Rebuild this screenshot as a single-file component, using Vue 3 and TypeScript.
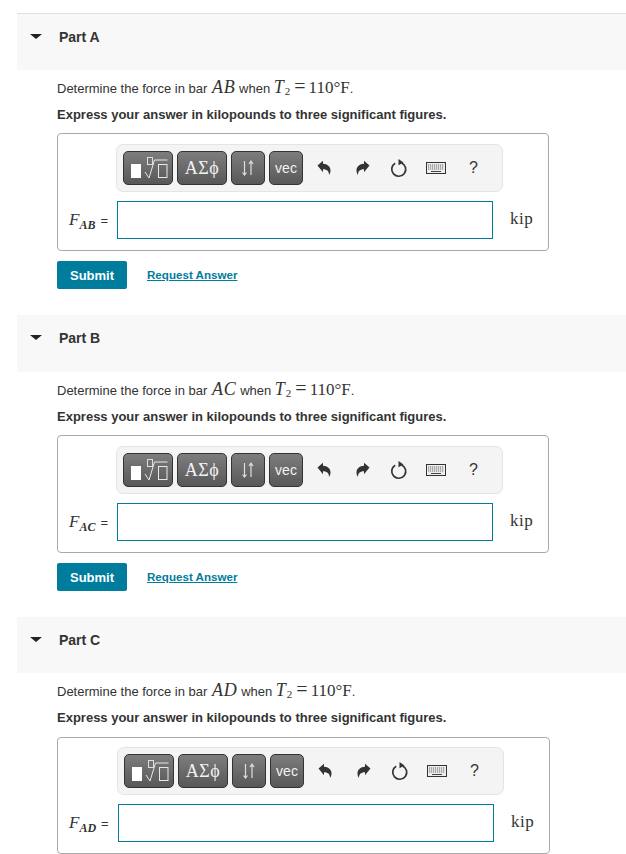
<script setup lang="ts">
interface Part {
  name: string
  bar: string
  last: boolean
}
const parts: Part[] = [
  { name: 'Part A', bar: 'AB', last: false },
  { name: 'Part B', bar: 'AC', last: false },
  { name: 'Part C', bar: 'AD', last: true },
]
</script>

<template>
  <div class="page">
    <section v-for="(p, i) in parts" :key="p.name" class="part" :class="{ first: i === 0, last: p.last }">
      <header class="head">
        <span class="tri"></span>
        <h2 class="title">{{ p.name }}</h2>
      </header>
      <div class="body">
        <p class="q">
          Determine the force in bar <i class="m big bar">{{ p.bar }}</i> when
          <span class="m big"><i>T</i><sub>2</sub><span class="rel">=</span><span class="num">110°F</span></span>.
        </p>
        <p class="ins">Express your answer in kilopounds to three significant figures.</p>
        <div class="box">
          <div class="toolbar">
            <button class="tb b1" type="button" aria-label="templates">
              <svg width="44" height="30" viewBox="0 0 44 30">
                <rect x="5" y="11" width="10" height="14" fill="#fff" />
                <rect x="21.5" y="4.5" width="5" height="7" fill="none" stroke="#ddd" />
                <path d="M19 19l4 6 5.5-18h13" fill="none" stroke="#e8e8e8" />
                <rect x="32.5" y="11.5" width="8.5" height="13" fill="none" stroke="#e8e8e8" />
              </svg>
            </button>
            <button class="tb b1 greek" type="button">ΑΣϕ</button>
            <button class="tb b2" type="button" aria-label="arrows">
              <svg width="20" height="20" viewBox="0 0 20 20">
                <path d="M6.5 3v14M4.5 14.5l2 2.5 2-2.5M13 17V3M11 6l2-3 2 3" fill="none" stroke="#ddd" stroke-width="1.2" />
              </svg>
            </button>
            <button class="tb b2 vec" type="button">vec</button>
            <svg class="ic undo" width="14" height="16" viewBox="0 0 14 16">
              <path d="M0.5 5.5L6 0.8v3c4.5 0.2 7.5 2.7 7.5 6.7 0 1.8-0.6 3.3-1.5 4.5 0.2-3.6-1.6-5.8-6-5.8v3z" fill="#333" />
            </svg>
            <svg class="ic redo" width="14" height="16" viewBox="0 0 14 16">
              <path d="M13.5 5.5L8 0.8v3c-4.5 0.2-7.5 2.7-7.5 6.7 0 1.8 0.6 3.3 1.5 4.5-0.2-3.6 1.6-5.8 6-5.8v3z" fill="#333" />
            </svg>
            <svg class="ic reset" width="18" height="20" viewBox="0 0 18 20">
              <path d="M5.2 5.2a7 7 0 1 0 6.5-0.3" fill="none" stroke="#333" stroke-width="1.7" />
              <path d="M8.5 1l5 3.6-5 2.6z" fill="#333" />
            </svg>
            <svg class="ic keys" width="20" height="12" viewBox="0 0 20 12">
              <rect x="0.5" y="0.5" width="19" height="11" fill="#eee" stroke="#333" />
              <path d="M2 3h16M2 5h16M2 7h16" stroke="#666" stroke-dasharray="1.2 0.8" />
              <path d="M5 9.5h10" stroke="#444" />
            </svg>
            <span class="help">?</span>
          </div>
          <div class="row">
            <label class="lab">
              <span class="m f"><i>F</i><sub><i>{{ p.bar }}</i></sub></span>
              <span class="eq">=</span>
            </label>
            <input class="inp" type="text" />
            <span class="unit">kip</span>
          </div>
        </div>
        <div v-if="!p.last" class="actions">
          <button class="submit" type="button">Submit</button>
          <a class="req" href="#">Request Answer</a>
        </div>
      </div>
    </section>
  </div>
</template>

<style scoped>
.page {
  width: 626px;
  height: 854px;
  overflow: hidden;
  box-sizing: border-box;
  padding: 13px 0 0 17px;
  font-family: "Liberation Sans", Arial, sans-serif;
  color: #333;
  font-size: 14px;
}
.part {
  height: 302px;
}
.part.first .head {
  border-top: 1px solid #dedede;
}
.head {
  height: 57px;
  background: #f8f8f8;
  display: flex;
  align-items: flex-start;
  padding-left: 13px;
  box-sizing: border-box;
}
.last .head {
  height: 56px;
}
.tri {
  width: 0;
  height: 0;
  margin-top: 20px;
  border-left: 6px solid transparent;
  border-right: 6px solid transparent;
  border-top: 5px solid #222;
}
.title {
  margin: 14px 0 0 17px;
  font-size: 14px;
  line-height: 18px;
  font-weight: 700;
  color: #333;
}
.body {
  padding: 4px 0 0 40px;
}
.q {
  margin: 0;
  line-height: 26px;
  height: 28px;
  font-size: 13px;
  white-space: nowrap;
}
.ins {
  margin: 0;
  font-weight: 700;
  line-height: 26px;
  height: 31px;
  font-size: 13px;
}
.last .ins {
  height: 32px;
}
.m {
  font-family: "Liberation Serif", "DejaVu Serif", serif;
}
.big {
  font-size: 18px;
}
.bar {
  margin-left: 1px;
  letter-spacing: 0.8px;
}
.num {
  font-size: 17px;
}
.big sub {
  font-size: 11px;
  line-height: 0;
  vertical-align: -2px;
  margin-left: 1px;
}
.rel {
  margin: 0 3px 0 4px;
  font-size: 20px;
  line-height: 0;
}
.box {
  box-sizing: border-box;
  width: 492px;
  height: 118px;
  border: 1px solid #aaa;
  border-radius: 4px;
  background: #fff;
  padding: 10px 0 0 58px;
}
.last .box {
  width: 493px;
  height: 117px;
  padding: 9px 0 0 59px;
}
.toolbar {
  box-sizing: border-box;
  width: 387px;
  height: 48px;
  background: #f4f4f4;
  border: 1px solid #e4e4e4;
  border-radius: 7px;
  display: flex;
  align-items: center;
  padding: 0 0 0 6px;
}
.tb {
  box-sizing: border-box;
  height: 34px;
  border: 1px solid #333;
  border-radius: 5px;
  background: linear-gradient(#7d7d7d, #585858);
  color: #f2f2f2;
  padding: 0;
  margin-right: 4px;
  display: flex;
  align-items: center;
  justify-content: center;
}
.b1 {
  width: 50px;
}
.b2 {
  width: 34px;
}
.greek {
  font-family: "Liberation Serif", serif;
  font-size: 18px;
  letter-spacing: 0.5px;
}
.vec {
  font-family: "Liberation Sans", sans-serif;
  font-size: 14px;
}
.ic {
  flex: none;
}
.undo {
  margin-left: 10px;
}
.redo {
  margin-left: 25px;
}
.reset {
  margin-left: 20px;
}
.keys {
  margin-left: 18px;
}
.help {
  margin-left: 23px;
  font-size: 16px;
  color: #333;
}
.row {
  display: flex;
  align-items: center;
  margin-top: 9px;
  margin-left: -58px;
}
.last .row {
  margin-left: -59px;
}
.lab {
  box-sizing: border-box;
  width: 59px;
  padding-left: 11px;
  display: flex;
  align-items: center;
  white-space: nowrap;
}
.last .lab {
  width: 60px;
}
.f {
  font-size: 17px;
}
.f sub {
  font-size: 12px;
  font-weight: 700;
  line-height: 0;
}
.eq {
  margin-left: 5px;
  font-size: 13px;
}
.inp {
  box-sizing: border-box;
  width: 376px;
  height: 38px;
  border: 1px solid #007c9d;
  outline: none;
  background: #fff;
  padding: 0 4px;
  flex: none;
}
.unit {
  margin: -3px 0 0 17px;
  font-family: "Liberation Serif", serif;
  font-size: 17px;
  letter-spacing: 0.5px;
}
.actions {
  margin-top: 10px;
  display: flex;
  align-items: center;
}
.submit {
  width: 70px;
  height: 28px;
  border: 0;
  border-radius: 2px;
  background: #007c9d;
  color: #fff;
  font-family: "Liberation Sans", sans-serif;
  font-weight: 700;
  font-size: 13px;
  padding: 0;
}
.req {
  margin: -2px 0 0 20px;
  color: #007c9d;
  font-size: 11.6px;
  font-weight: 700;
  text-decoration: underline;
}
</style>
